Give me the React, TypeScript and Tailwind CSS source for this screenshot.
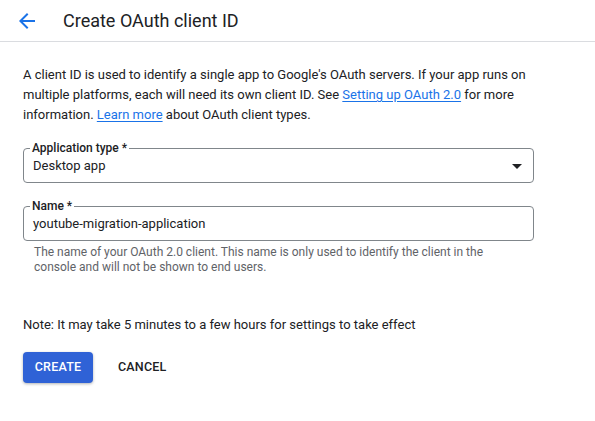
const ArrowBack = () => (
  <svg width="24" height="24" viewBox="0 0 24 24" className="fill-[#1a73e8]">
    <path d="M20 11H7.83l5.59-5.59L12 4l-8 8 8 8 1.41-1.41L7.83 13H20v-2z" />
  </svg>
);

const OutlinedField = ({
  label,
  value,
  dropdown,
  className,
}: {
  label: string;
  value: string;
  dropdown?: boolean;
  className?: string;
}) => (
  <fieldset
    className={`w-[511px] rounded-[4px] border border-[#80868b] pl-[9px] pr-[11px] pb-[6px] ${className ?? ""}`}
  >
    <legend className="ml-[-3px] px-[2px] text-[12px] leading-[16px] font-medium text-[#202124]">
      {label}
    </legend>
    <div className="flex items-center justify-between">
      <span className="text-[13px] leading-[20px] text-[#202124]">{value}</span>
      {dropdown && (
        <svg width="10" height="5" viewBox="0 0 10 5" className="fill-[#202124]">
          <path d="M0 0h10L5 5z" />
        </svg>
      )}
    </div>
  </fieldset>
);

export default function App() {
  return (
    <div className="min-h-[421px] w-[595px] bg-white font-['Roboto','Liberation_Sans',sans-serif] text-[#202124]">
      <header className="flex h-[42px] items-center border-b border-[#dadce0] pl-[15px]">
        <ArrowBack />
        <h1 className="ml-[24px] text-[18px] leading-[24px] text-[#202124]">
          Create OAuth client ID
        </h1>
      </header>

      <main className="px-[23px]">
        <p className="mt-[23px] w-[520px] text-[13px] leading-[20px]">
          A client ID is used to identify a single app to Google's OAuth servers. If your app runs on
          multiple platforms, each will need its own client ID. See{" "}
          <a className="text-[#1a73e8] underline underline-offset-2">Setting up OAuth 2.0</a> for more
          information. <a className="text-[#1a73e8] underline underline-offset-2">Learn more</a> about
          OAuth client types.
        </p>

        <OutlinedField
          className="mt-[15px]"
          label="Application type *"
          value="Desktop app"
          dropdown
        />

        <OutlinedField
          className="mt-[15px]"
          label="Name *"
          value="youtube-migration-application"
        />

        <p className="mt-[4px] pl-[11px] text-[12px] leading-[15px] text-[#5f6368]">
          The name of your OAuth 2.0 client. This name is only used to identify the client in the
          <br />
          console and will not be shown to end users.
        </p>

        <p className="mt-[40px] text-[13px] leading-[20px]">
          Note: It may take 5 minutes to a few hours for settings to take effect
        </p>

        <div className="mt-[17px] flex items-center">
          <button className="h-[31px] w-[70px] rounded-[4px] bg-[#2f62d6] text-[12.5px] font-medium tracking-[0.2px] text-white shadow-[0_1px_3px_rgba(60,64,67,0.4)]">
            CREATE
          </button>
          <button className="ml-[25px] text-[12.5px] font-medium tracking-[0.2px] text-[#202124]">
            CANCEL
          </button>
        </div>
      </main>
    </div>
  );
}
